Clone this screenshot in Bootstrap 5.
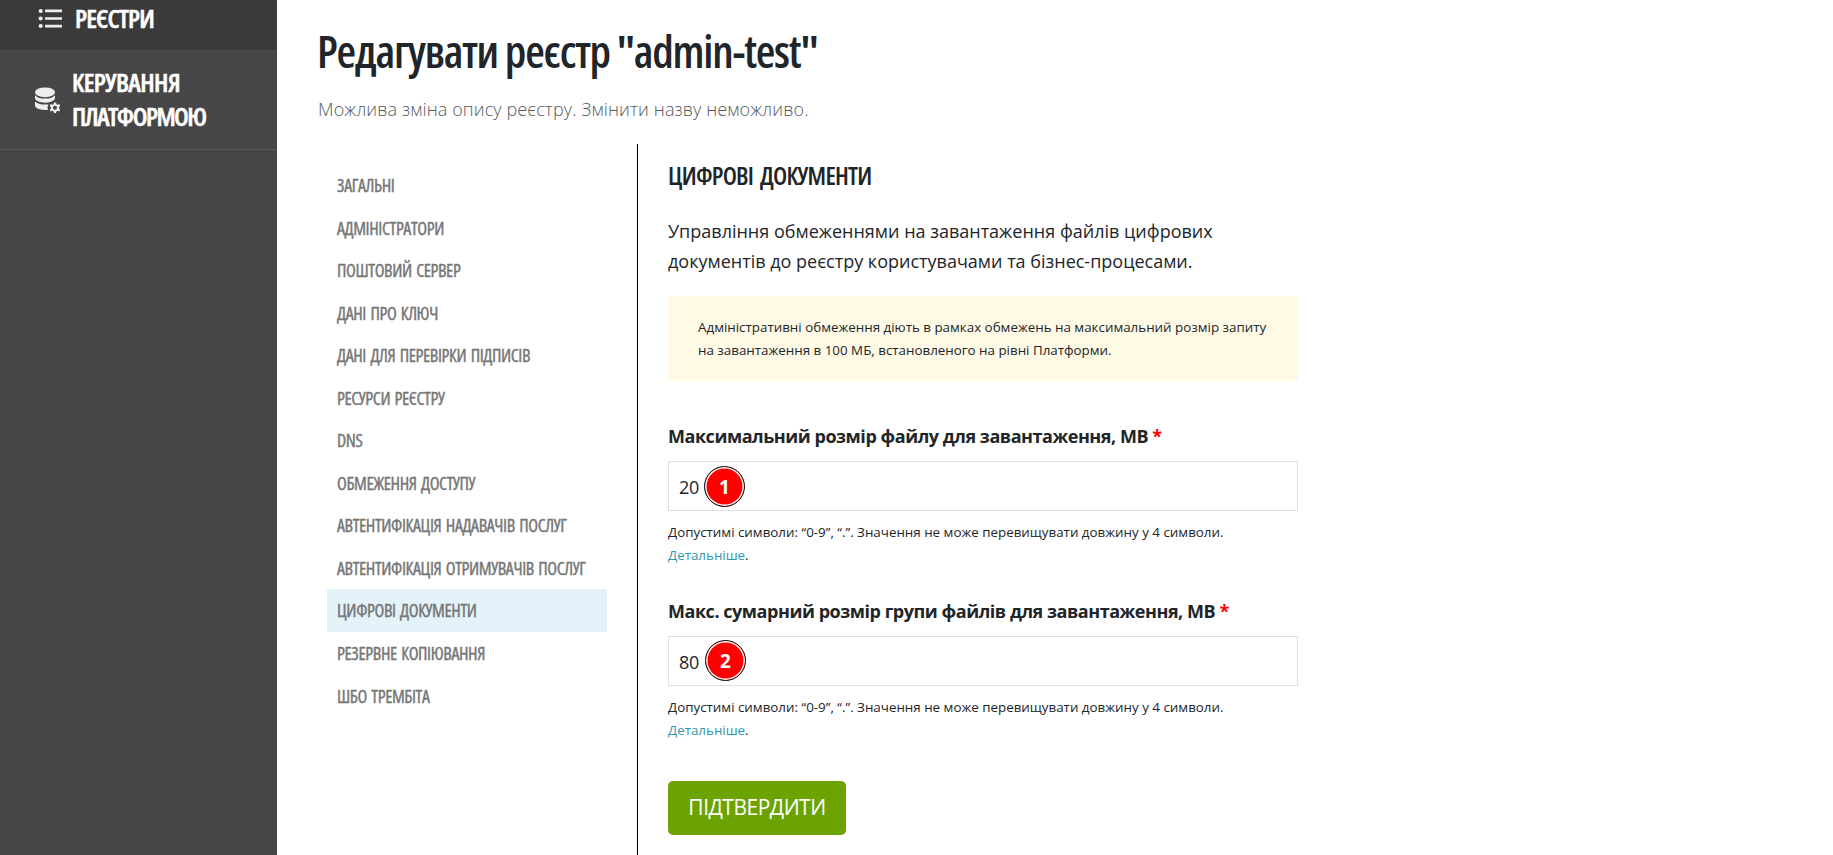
<!DOCTYPE html>
<html lang="uk">
<head>
<meta charset="utf-8">
<meta name="viewport" content="width=device-width, initial-scale=1">
<title>Редагувати реєстр</title>
<link rel="stylesheet" href="https://cdn.jsdelivr.net/npm/bootstrap@5.3.0/dist/css/bootstrap.min.css">
<style>
body { font-family: "Open Sans", sans-serif; font-size: 18px; color: #212529; }
.narrow { font-stretch: 75%; }
.sidebar { width: 277px; background: #464648; }
.side-item { color: #fff; font-weight: 600; font-size: 26px; line-height: 34px; letter-spacing: -1.55px; -webkit-text-stroke: .5px; border-bottom: 1px solid #59595b; text-decoration: none; }
.side-item:hover { color: #fff; }
.side-registries { height: 51px; padding: 0 0 13px 38px; background: #3a3a3a; gap: 12px; border-color: #4c4c4d; letter-spacing: -.9px; }
.side-registries span { padding-bottom: 2px; }
.side-platform { height: 99px; padding-left: 34px; gap: 12px; }
.side-platform > span { padding-bottom: 2px; }
.word-loose { letter-spacing: -.6px; }
.content-area { padding: 22px 0 0 41px; }
.page-title { font-weight: 600; font-size: 45px; line-height: 58px; letter-spacing: -1.25px; margin: 0 0 15px -1px; }
.subtitle { font-weight: 300; line-height: 28px; letter-spacing: .11px; color: #555a5f; margin-bottom: 21px; }
.side-tabs { width: 319px; padding: 20px 30px 0 9px; }
.side-tabs .nav-link { height: 42.55px; padding: 0 10px; font-weight: 500; font-size: 18px; letter-spacing: -.4px; word-spacing: 1.5px; line-height: 42px; color: #767676; -webkit-text-stroke: .35px; white-space: nowrap; border-radius: 0; }
.side-tabs .nav-link.active { background: #e4f2fa; }
.form-pane { border-left: 1px solid #000; padding: 13px 0 0 30px; }
.form-column { width: 630px; }
.section-title { font-weight: 600; font-size: 25px; line-height: 36px; letter-spacing: -.76px; word-spacing: 3px; margin-bottom: 23px; }
.intro { line-height: 30px; margin-bottom: 20px; }
.notice { background: #fffae6; height: 85px; padding: 20px 25px 0 30px; line-height: 23px; margin-bottom: 40px; }
.fine { font-size: 13.37px; line-height: 23px; white-space: nowrap; }
.field-label { display: block; font-weight: 700; letter-spacing: -.46px; line-height: 30px; margin-bottom: 10px; }
.field-label span { color: #f00; }
.field-box .form-control { height: 50px; border: 1px solid #dee0e8; border-radius: 0; padding: 4px 10px 2px; font-size: 18px; letter-spacing: -.3px; color: #212529; }
.field-help { padding-top: 10px; height: 85px; }
.field-help a { color: #2f98ab; text-decoration: none; }
.callout { position: absolute; left: 36px; top: 5px; width: 41px; height: 41px; border-radius: 50%; border: 1.5px solid #111; background: #f00; box-shadow: inset 0 0 0 1.5px #fff; color: #fff; font: 700 19px/40px "Noto Sans", "Open Sans", sans-serif; text-align: center; }
.callout-second { left: 37px; top: 4px; }
.btn-confirm, .btn-confirm:hover { width: 178px; height: 54px; padding: 0; background: #6ca300; color: #fff; border: 0; border-radius: 5px; font-size: 21px; letter-spacing: -.5px; margin-top: 10px; }
</style>
<script src="https://cdn.jsdelivr.net/npm/bootstrap@5.3.0/dist/js/bootstrap.bundle.min.js"></script>
</head>
<body>
<div class="d-flex vh-100 overflow-hidden">
  <aside class="sidebar flex-shrink-0">
    <a href="#" class="side-item side-registries narrow d-flex align-items-center">
      <svg width="25" height="22" viewBox="0 0 25 22" fill="#eee"><circle cx="2.7" cy="3" r="2.1"/><circle cx="2.7" cy="10.5" r="2.1"/><circle cx="2.7" cy="18" r="2.1"/><path d="M7 1.6h17v2.6H7zM7 9.2h17v2.6H7zM7 16.8h17v2.6H7z"/></svg>
      <span>РЕЄСТРИ</span>
    </a>
    <a href="#" class="side-item side-platform narrow d-flex align-items-center">
      <svg width="26" height="26" viewBox="0 0 26 26" fill="#eee"><ellipse cx="11" cy="5.3" rx="10" ry="4.9"/><path d="M1 8.2c2 2.5 5.5 3.4 10 3.4s8-.9 10-3.4V11c0 1.6-2 3-4 3.7-4 1.4-9 1.2-12.500-.2C2.500 13.700 1 12.700 1 11z"/><path d="M1 14.500c2 2 5.500 3.100 10 3.100h3.500l-1 2.400.5 2.700c-4 .5-8 0-10.500-1.200C1.700 20.600 1 19.500 1 18.500z"/><path fill-rule="evenodd" d="M20 15.500h2l.5 1.700 1.200.6 1.600-.7 1 1.700-1.200 1.200v1.500l1.200 1.200-1 1.700-1.600-.6-1.200.6-.5 1.600h-2l-.5-1.600-1.200-.6-1.600.6-1-1.700 1.200-1.200V20l-1.200-1.200 1-1.700 1.600.7 1.200-.6zM21 18.800a2 2 0 1 0 0 4 2 2 0 1 0 0-4z"/></svg>
      <span><span class="word-loose">КЕРУВАННЯ</span><br>ПЛАТФОРМОЮ</span>
    </a>
  </aside>
  <main class="content-area flex-grow-1 d-flex flex-column">
    <h1 class="page-title narrow">Редагувати реєстр "admin-test"</h1>
    <p class="subtitle">Можлива зміна опису реєстру. Змінити назву неможливо.</p>
    <div class="d-flex flex-grow-1">
      <nav class="side-tabs narrow nav flex-column flex-nowrap flex-shrink-0">
        <a class="nav-link" href="#">ЗАГАЛЬНІ</a>
        <a class="nav-link" href="#">АДМІНІСТРАТОРИ</a>
        <a class="nav-link" href="#">ПОШТОВИЙ СЕРВЕР</a>
        <a class="nav-link" href="#">ДАНІ ПРО КЛЮЧ</a>
        <a class="nav-link" href="#">ДАНІ ДЛЯ ПЕРЕВІРКИ ПІДПИСІВ</a>
        <a class="nav-link" href="#">РЕСУРСИ РЕЄСТРУ</a>
        <a class="nav-link" href="#">DNS</a>
        <a class="nav-link" href="#">ОБМЕЖЕННЯ ДОСТУПУ</a>
        <a class="nav-link" href="#">АВТЕНТИФІКАЦІЯ НАДАВАЧІВ ПОСЛУГ</a>
        <a class="nav-link" href="#">АВТЕНТИФІКАЦІЯ ОТРИМУВАЧІВ ПОСЛУГ</a>
        <a class="nav-link active" href="#">ЦИФРОВІ ДОКУМЕНТИ</a>
        <a class="nav-link" href="#">РЕЗЕРВНЕ КОПІЮВАННЯ</a>
        <a class="nav-link" href="#">ШБО ТРЕМБІТА</a>
      </nav>
      <section class="form-pane">
        <form class="form-column">
          <h2 class="section-title narrow">ЦИФРОВІ ДОКУМЕНТИ</h2>
          <p class="intro">Управління обмеженнями на завантаження файлів цифрових<br>документів до реєстру користувачами та бізнес-процесами.</p>
          <div class="notice fine">Адміністративні обмеження діють в рамках обмежень на максимальний розмір запиту<br>на завантаження в 100 МБ, встановленого на рівні Платформи.</div>
          <label class="field-label" for="maxFile">Максимальний розмір файлу для завантаження, МВ <span>*</span></label>
          <div class="field-box position-relative">
            <input class="form-control" id="maxFile" type="text" value="20">
            <span class="callout">1</span>
          </div>
          <div class="field-help fine">Допустимі символи: “0-9”, “.”. Значення не може перевищувати довжину у 4 символи.<br><a href="#">Детальніше</a>.</div>
          <label class="field-label" for="maxGroup">Макс. сумарний розмір групи файлів для завантаження, МВ <span>*</span></label>
          <div class="field-box position-relative">
            <input class="form-control" id="maxGroup" type="text" value="80">
            <span class="callout callout-second">2</span>
          </div>
          <div class="field-help fine">Допустимі символи: “0-9”, “.”. Значення не може перевищувати довжину у 4 символи.<br><a href="#">Детальніше</a>.</div>
          <button type="button" class="btn btn-confirm">ПІДТВЕРДИТИ</button>
        </form>
      </section>
    </div>
  </main>
</div>
</body>
</html>
